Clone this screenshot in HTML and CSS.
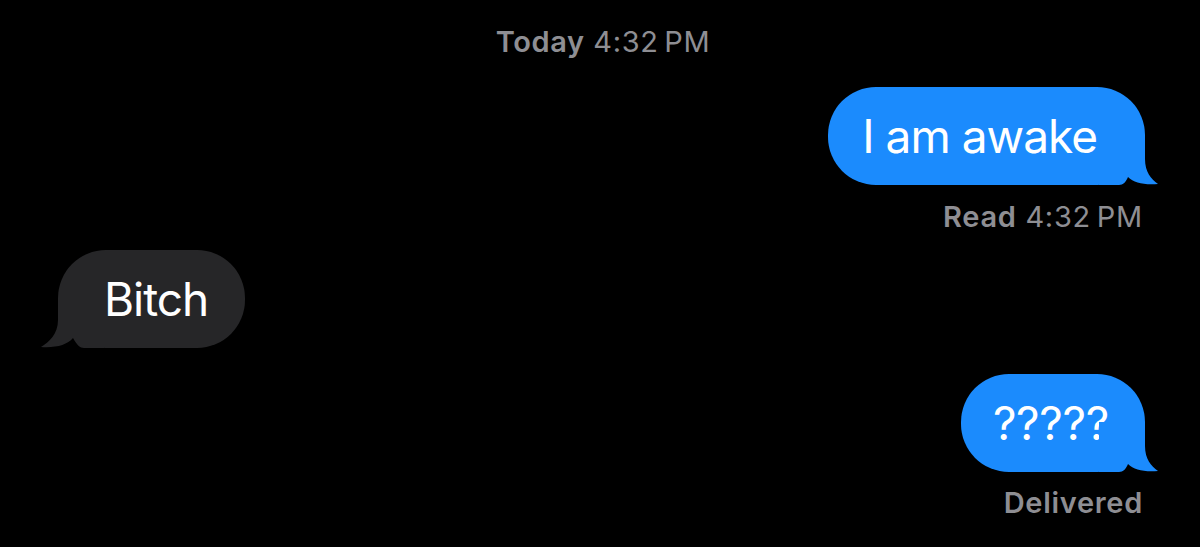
FILE: index.html
```html
<!DOCTYPE html>
<html lang="en">
<head>
    <meta charset="UTF-8">
    <meta name="viewport" content="width=device-width, initial-scale=1.0">
    <title>Messages</title>
    <link rel="stylesheet" href="styles.css">
</head>
<body>
    <div class="thread">
        <!-- Timestamp -->
        <div class="stamp"><b>Today</b> 4:32&#8201;PM</div>

        <!-- Sent -->
        <div class="row sent-row">
            <div class="bubble sent">
                I am awake
                <svg class="tail" width="60" height="50" viewBox="0 0 60 50"><path d="M0,50 L20,50 C24,50 27,47 29,42 C35,48 45,50 59,49 C52,44 46,37 46,24 L46,0 L0,0 Z"/></svg>
            </div>
        </div>
        <div class="status status-read"><b>Read</b> 4:32&#8201;PM</div>

        <!-- Received -->
        <div class="row recv-row">
            <div class="bubble recv">
                Bitch
                <svg class="tail" width="64" height="50" viewBox="0 0 64 50"><path d="M0,50 L20,50 C24,50 27,47 31,40 C37,47 48,50 63,49 C55,44 46,36 46,22 L46,0 L0,0 Z"/></svg>
            </div>
        </div>

        <!-- Sent -->
        <div class="row sent-row last">
            <div class="bubble sent short">
                ?????
                <svg class="tail" width="60" height="50" viewBox="0 0 60 50"><path d="M0,50 L20,50 C24,50 27,47 29,42 C35,48 45,50 59,49 C52,44 46,37 46,24 L46,0 L0,0 Z"/></svg>
            </div>
        </div>
        <div class="status status-delivered"><b>Delivered</b></div>
    </div>
</body>
</html>
```

FILE: styles.css
```css
/* Base */
* {
    margin: 0;
    padding: 0;
    box-sizing: border-box;
}
body {
    background-color: #000;
    font-family: Inter, "Noto Sans", sans-serif;
    color: #fff;
    height: 100vh;
    overflow: hidden;
}
.thread {
    display: flex;
    flex-direction: column;
    padding: 24px 55px 0 58px;
}
/* Timestamp */
.stamp {
    text-align: center;
    font-size: 29px;
    line-height: 35px;
    letter-spacing: 0.6px;
    color: #8e8e93;
    margin-left: 3px;
}
.stamp b {
    font-weight: 600;
}
/* Rows */
.row {
    display: flex;
}
.sent-row {
    justify-content: flex-end;
    margin-top: 28px;
}
.recv-row {
    justify-content: flex-start;
    margin-top: 17px;
}
.sent-row.last {
    margin-top: 26px;
}
/* Bubbles */
.bubble {
    position: relative;
    display: flex;
    align-items: center;
    height: 98px;
    border-radius: 48px;
    font-size: 46px;
    letter-spacing: -1px;
    white-space: nowrap;
}
.sent {
    background-color: #1b8bfd;
    padding: 0 48px 0 34px;
}
.sent.short {
    padding: 0 36px 0 32px;
    letter-spacing: -0.3px;
}
.recv {
    background-color: #262628;
    padding: 0 37px 0 46px;
}
.tail {
    position: absolute;
    bottom: 0;
}
.sent .tail {
    right: -14px;
    fill: #1b8bfd;
}
.recv .tail {
    left: -18px;
    fill: #262628;
    transform: scaleX(-1);
}
/* Status labels */
.status {
    text-align: right;
    font-size: 29px;
    line-height: 33px;
    letter-spacing: 0.7px;
    color: #8e8e93;
    margin-right: 2px;
}
.status b {
    font-weight: 600;
}
.status-read {
    margin-top: 15px;
}
.status-delivered {
    margin-top: 14px;
}
```
